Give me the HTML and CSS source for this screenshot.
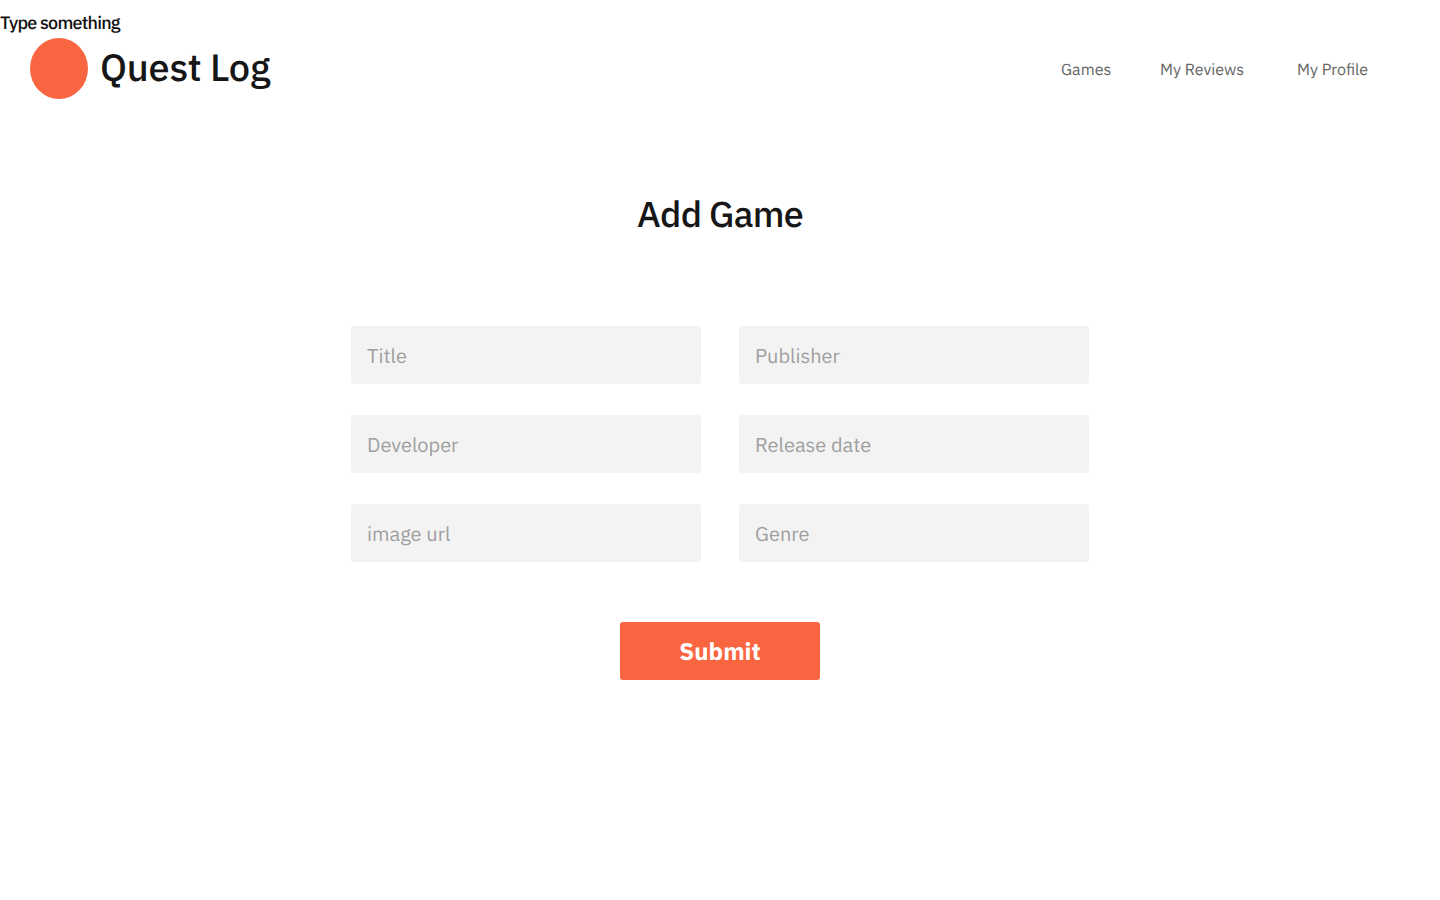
FILE: index.html
```html
<!DOCTYPE html>
<html lang="en">
<head>
<meta charset="utf-8">
<title>Quest Log</title>
<link rel="stylesheet" href="styles.css">
</head>
<body>
<p class="note">Type something</p>
<header class="header">
  <div class="brand"><span class="logo"></span><span class="name">Quest Log</span></div>
  <nav class="nav"><a class="games">Games</a><a class="reviews">My Reviews</a><a class="profile">My Profile</a></nav>
</header>
<main class="main">
  <h1 class="title">Add Game</h1>
  <form class="form">
    <div class="fields">
      <div class="field">Title</div>
      <div class="field">Publisher</div>
      <div class="field">Developer</div>
      <div class="field">Release date</div>
      <div class="field">image url</div>
      <div class="field">Genre</div>
    </div>
    <button class="submit" type="button">Submit</button>
  </form>
</main>
</body>
</html>
```
FILE: styles.css
```css
* { box-sizing: border-box; }
body { margin: 0; height: 900px; background: #fff; overflow: hidden; font-family: "IBM Plex Sans", "Noto Sans", sans-serif; color: #161616; text-rendering: geometricPrecision; }
.note { margin: 0; padding-top: 11px; height: 38px; font-size: 18px; line-height: 24px; font-weight: 500; letter-spacing: -0.78px; color: #111; }
.header { height: 61px; padding: 0 72px 0 30px; display: flex; justify-content: space-between; align-items: center; }
.brand { display: flex; align-items: center; gap: 12px; }
.logo { width: 58px; height: 61px; border-radius: 50%; background: #f96540; }
.name { padding-bottom: 2px; font-size: 38px; line-height: 50px; font-weight: 500; letter-spacing: -0.25px; white-space: nowrap; }
.nav { padding-top: 2px; display: flex; color: #666; font-size: 16px; line-height: 24px; white-space: nowrap; }
.games { width: 99px; }
.reviews { width: 137px; }
.profile { width: 71px; }
.main { padding-top: 90px; display: flex; flex-direction: column; align-items: center; }
.title { margin: 0 0 87px; font-size: 36px; line-height: 50px; font-weight: 500; letter-spacing: -0.72px; }
.form { display: flex; flex-direction: column; align-items: center; gap: 60px; }
.fields { display: grid; grid-template-columns: 350px 350px; gap: 31px 38px; }
.field { height: 58px; padding: 2px 16px 0; background: #f3f3f3; border-radius: 3px; display: flex; align-items: center; color: #9f9f9f; font-size: 20px; line-height: 28px; }
.submit { width: 200px; height: 58px; border: 0; border-radius: 3px; background: #f96540; color: #fff; font: 700 24px/32px "IBM Plex Sans", "Noto Sans", sans-serif; text-rendering: geometricPrecision; }
```
